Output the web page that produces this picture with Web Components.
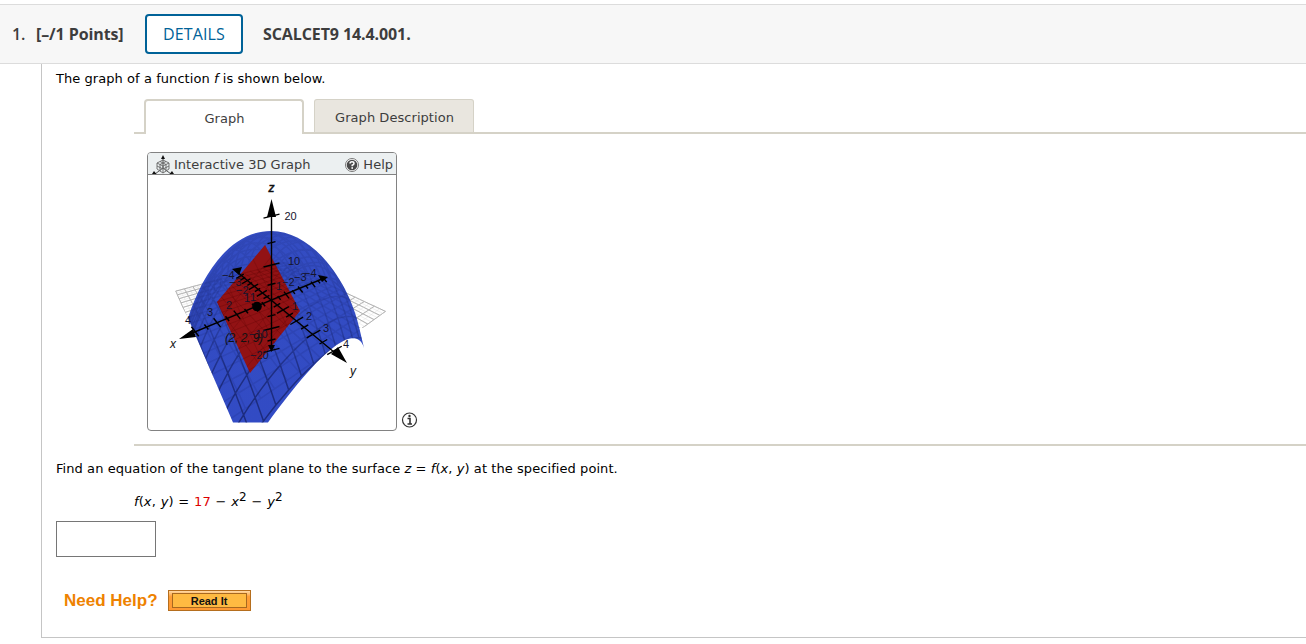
<!DOCTYPE html>
<html lang="en">
<head>
<meta charset="utf-8">
<title>SCALCET9 14.4.001.</title>
<style>
    body {
        margin: 0;
        background: #fff;
        color: #000;
        font: 13px Verdana, "DejaVu Sans", sans-serif;
    }
</style>
</head>
<body>
<question-header number="1." points="[–/1 Points]">SCALCET9 14.4.001.</question-header>
<question-body>
    <p-line>The graph of a function <i>f</i> is shown below.</p-line>
    <tab-panel first="Graph" second="Graph Description">
        <graph-tool></graph-tool>
    </tab-panel>
    <tangent-question></tangent-question>
    <need-help></need-help>
</question-body>

<script>
function attach(el, html) {
    el.attachShadow({ mode: 'open' }).innerHTML = html;
}

/** Grey bar with the question number, points and details button */
class QuestionHeader extends HTMLElement {
    constructor() {
        super();
        attach(this, `
            <style>
                :host {
                    display: flex;
                    align-items: center;
                    box-sizing: border-box;
                    height: 60px;
                    margin-top: 4px;
                    padding-left: 12px;
                    background: #f7f7f7;
                    border-top: 1px solid #dcdcdc;
                    border-bottom: 1px solid #dcdcdc;
                    color: #3d3d3d;
                    font: 700 16px "Open Sans", sans-serif;
                    letter-spacing: -0.1px;
                    white-space: nowrap;
                }
                .number { width: 24px; font-weight: 600; }
                .points { width: 109px; }
                button {
                    width: 98px;
                    height: 40px;
                    margin-right: 20px;
                    padding: 0;
                    border: 2px solid #006298;
                    border-radius: 4px;
                    background: #fff;
                    color: #006298;
                    font: 500 16px "Open Sans", sans-serif;
                    letter-spacing: 0.15px;
                }
            </style>
            <span class="number"></span>
            <span class="points"></span>
            <button>DETAILS</button>
            <span><slot></slot></span>
        `);
    }

    connectedCallback() {
        this.shadowRoot.querySelector('.number').textContent = this.getAttribute('number');
        this.shadowRoot.querySelector('.points').textContent = this.getAttribute('points');
    }
}

class QuestionBody extends HTMLElement {
    constructor() {
        super();
        attach(this, `
            <style>
                :host {
                    display: flex;
                    flex-direction: column;
                    box-sizing: border-box;
                    height: 574px;
                    margin-left: 41px;
                    padding: 7px 0 0 14px;
                    border-left: 1px solid #c5c5c5;
                    border-bottom: 1px solid #c5c5c5;
                }
            </style>
            <slot></slot>
        `);
    }
}

class PLine extends HTMLElement {
    constructor() {
        super();
        attach(this, `
            <style>
                :host { display: block; height: 28px; line-height: 16px; letter-spacing: 0.06px; white-space: nowrap; }
            </style>
            <slot></slot>
        `);
    }
}

class TabPanel extends HTMLElement {
    constructor() {
        super();
        attach(this, `
            <style>
                :host {
                    display: block;
                    box-sizing: border-box;
                    height: 347px;
                    margin-left: 78px;
                    border-bottom: 2px solid #d5d2c7;
                }
                .tabs { display: flex; height: 35px; color: #3d3d3d; letter-spacing: 0.05px; }
                .tab {
                    box-sizing: border-box;
                    width: 160px;
                    padding-left: 1px;
                    text-align: center;
                    border: 2px solid #d5d2c7;
                    border-bottom: 0;
                    border-radius: 4px 4px 0 0;
                    line-height: 35px;
                }
                .idle {
                    height: 35px;
                    border-width: 1px 1px 2px;
                    border-bottom: 2px solid #d5d2c7;
                    background: #e9e6df;
                    border-radius: 3px 3px 0 0;
                }
                .line { box-sizing: border-box; width: 10px; border-bottom: 2px solid #d5d2c7; }
                .rest { flex: 1; }
                .content { padding: 18px 0 0 13px; }
            </style>
            <div class="tabs">
                <div class="line"></div>
                <div class="tab first"></div>
                <div class="line"></div>
                <div class="tab idle second"></div>
                <div class="line rest"></div>
            </div>
            <div class="content"><slot></slot></div>
        `);
    }

    connectedCallback() {
        this.shadowRoot.querySelector('.first').textContent = this.getAttribute('first');
        this.shadowRoot.querySelector('.second').textContent = this.getAttribute('second');
    }
}

class GraphTool extends HTMLElement {
    constructor() {
        super();
        attach(this, `
            <style>
                :host { display: flex; align-items: flex-end; gap: 4px; color: #3d3d3d; }
                .frame {
                    box-sizing: border-box;
                    width: 250px;
                    height: 279px;
                    border: 1px solid #828282;
                    border-radius: 4px;
                    overflow: hidden;
                }
                .bar {
                    display: flex;
                    align-items: center;
                    box-sizing: border-box;
                    height: 22px;
                    padding: 3px 3px 0 4px;
                    background: #ecf0f1;
                    border-bottom: 1px solid #828282;
                    line-height: 18px;
                    white-space: nowrap;
                }
                .cube { flex: none; }
                .title { flex: 1; }
                .q { margin-right: 4px; flex: none; }
                .info { margin-bottom: 3px; }
                svg { display: block; }
            </style>
            <div class="frame">
                <div class="bar">
                    <svg class="cube" width="22" height="20" viewBox="0 0 22 20" fill="none" stroke="#666" stroke-width="0.9">
                        <path d="M11 3V13M11 13L3 19M11 13L19 19" stroke="#444"/>
                        <path d="M11 5L17 8V14L11 18L5 14V8ZM5 8L11 11L17 8M11 11V18M8 6.500L14 9.500V16M14 6.500L8 9.500V16M5 11L11 14L17 11"/>
                        <path d="M11 0L13 4H9ZM0 19L2 16L4.500 19ZM17.500 19L20 16L22 19Z" fill="#111" stroke="none"/>
                    </svg>
                    <span class="title">Interactive 3D Graph</span>
                    <svg class="q" width="14" height="14" viewBox="0 0 14 14">
                        <circle cx="7" cy="7" r="6.500" fill="#fff" stroke="#777"/>
                        <circle cx="7" cy="7" r="5.300" fill="#4a4a4a"/>
                        <path d="M5 5.500Q5 3.700 7 3.700T9 5.400Q9 6.500 7.200 7.200V8.200" fill="none" stroke="#fff" stroke-width="1.500"/>
                        <rect x="6.400" y="9.200" width="1.600" height="1.600" fill="#fff"/>
                    </svg>
                    <span>Help</span>
                </div>
                <surface-plot></surface-plot>
            </div>
            <svg class="info" width="17" height="16" viewBox="0 0 17 16">
                <circle cx="8.500" cy="8" r="7" fill="#fff" stroke="#333" stroke-width="1.200"/>
                <path d="M6.500 6.500H9V12M6.500 12H11" fill="none" stroke="#333" stroke-width="1.600"/>
                <circle cx="8.500" cy="4" r="1.200" fill="#333"/>
            </svg>
        `);
    }
}

// Perspective projection of a point in graph space to the canvas
function project(x, y, z) {
    const d = 1 - 0.0446 * x - 0.0833 * y - 0.01327 * z;
    return [271.5 + (-15.7 * x + 10.5 * y) / d, 301 + (6.27 * x + 8.25 * y - 3.12 * z) / d];
}

// The z = 0 plane, with its side corners pulled to the edges of the drawing
function projectFloor(x, y) {
    const [px, py] = project(x, y, 0);
    const left = Math.max(0, (x - y) / 8);
    const right = Math.max(0, (y - x) / 8);
    return [px - 5 * left - 10 * right, py - 3 * left + right];
}

// Grid lines over -4..4, point(x, y) gives the place on the canvas
function gridPath(point, step) {
    let d = '';
    for (let a = -4; a <= 4; a += step) {
        for (const flip of [false, true]) {
            for (let b = -4; b <= 4; b += 0.25) {
                const p = flip ? point(b, a) : point(a, b);
                d += (b === -4 ? 'M' : 'L') + p[0].toFixed(1) + ' ' + p[1].toFixed(1);
            }
        }
    }
    return d;
}

// Tick marks along one axis, dx and dy are the half length of a mark
function ticks(points, dx, dy) {
    return points.map(([x, y, s]) =>
        `M${x - dx * s} ${y - dy * s}L${x + dx * s} ${y + dy * s}`).join('');
}

class SurfacePlot extends HTMLElement {
    constructor() {
        super();
        const range = [-4, -3.5, -3, -2.5, -2, -1.5, -1, -0.5, 0.5, 1, 1.5, 2, 2.5, 3, 3.5, 4];
        const size = v => (v % 1 ? 0.55 : 1) * (1 + v * 0.08);
        const xTicks = range.map(v => [...project(v, 0, 0), size(v)]);
        const yTicks = range.map(v => [...project(0, v, 0), size(v)]);
        const zTicks = [-20, -15, -10, -5, 5, 10, 15, 20].map(v => [...project(0, 0, v), v % 10 ? 0.5 : 1]);
        const labels = [
            [288, 265, '10'],
            [222, 279, '−4'], [229, 286, '−3'], [236, 293.500, '−2'], [244, 302, '1'], [250, 301, '1'],
            [226, 309, '2'], [207, 316, '3'], [185, 324, '4'],
            [276, 290, '1'], [282, 286, '−2'], [294, 281, '−3'], [304, 277, '−4'],
            [292, 310, '1'], [306, 320, '2'], [323, 332, '3'], [343, 348, '4'],
            [249, 338, '−10'], [250, 359, '−20']
        ];
        const surface = gridPath((x, y) => project(x, y, 17 - x * x - y * y), 0.5);
        const plane = gridPath((x, y) => project(x, y, 25 - 4 * x - 4 * y), 0.5);
        const floor = gridPath(projectFloor, 0.5);
        const floorFine = gridPath(projectFloor, 0.25);
        attach(this, `
            <style>
                :host { display: block; }
                svg { display: block; }
                text { font: 11px "Liberation Sans", Arial, sans-serif; fill: #14142c; }
                .name { font-style: italic; font-size: 12px; fill: #111; }
            </style>
            <svg width="248" height="255" viewBox="148 175 248 255">
                <defs>
                    <linearGradient id="blue" x1="0" y1="0" x2="0" y2="1">
                        <stop offset="0" stop-color="#344dc2"/>
                        <stop offset="1" stop-color="#324bc4"/>
                    </linearGradient>
                    <linearGradient id="lines" gradientUnits="userSpaceOnUse" x1="0" y1="231" x2="0" y2="422">
                        <stop offset="0" stop-color="#16236c" stop-opacity="0.12"/>
                        <stop offset="0.45" stop-color="#16236c" stop-opacity="0.28"/>
                        <stop offset="0.75" stop-color="#101a58" stop-opacity="0.6"/>
                        <stop offset="1" stop-color="#101a58" stop-opacity="0.65"/>
                    </linearGradient>
                    <clipPath id="surface">
                        <path d="M188 318C203 272 231 231 271 231C313 231 350 282 360 331L364 348C361 337 353 337 345 340C322 351 292 390 268 422.500H233Z"/>
                    </clipPath>
                    <clipPath id="plane"><path d="M265 245L300 311L250 373L217 302Z"/></clipPath>
                    <clipPath id="floor"><path d="M148 250H396V322L362 328H346L300 300L192 324Z"/></clipPath>
                </defs>
                <path clip-path="url(#floor)" d="${floor}" fill="none" stroke="#a8a8a8"/>
                <path clip-path="url(#floor)" d="${floorFine}" fill="none" stroke="#ccc" stroke-opacity="0.3"/>
                <g clip-path="url(#surface)">
                    <rect x="148" y="175" width="248" height="255" fill="url(#blue)"/>
                    <path d="${floor}" fill="none" stroke="#18256f" stroke-opacity="0.17" stroke-width="1.500"/>
                    <path d="${surface}" fill="none" stroke="url(#lines)" stroke-width="1.500"/>
                </g>
                <g clip-path="url(#plane)">
                    <rect x="210" y="240" width="95" height="140" fill="#921214"/>
                    <path d="${plane}" fill="none" stroke="#5c0808" stroke-opacity="0.25"/>
                    <path d="${floor}" fill="none" stroke="#5c0808" stroke-opacity="0.3"/>
                </g>
                <g stroke="#000" stroke-width="1.400" fill="none">
                    <path d="M271.500 210V346M185 336L322 279M236 271L340 357"/>
                    <path d="${ticks(xTicks, 2.8, 3.6)}"/>
                    <path d="${ticks(yTicks, 5.5, -3.2)}"/>
                    <path d="${ticks(zTicks, 8, -2)}"/>
                </g>
                <path d="M271.500 199L276 217H267ZM179 339L193 329L196 337ZM347 363L331 354L338 347ZM328 277L318 275L322 282ZM232 269L242 267L239 275ZM271.500 352L268 345H275Z"/>
                <circle cx="257" cy="306.500" r="4.800"/>
                <text x="284.500" y="219.500">20</text>
                ${labels.map(([x, y, t]) => `<text x="${x}" y="${y}">${t}</text>`).join('')}
                <text class="name" x="225" y="342" textLength="38">(2, 2, 9)</text>
                <text class="name" x="268.500" y="191.500" stroke="#111" stroke-width="0.500">z</text>
                <text class="name" x="170" y="348">x</text>
                <text class="name" x="350" y="375">y</text>
            </svg>
        `);
    }
}

class TangentQuestion extends HTMLElement {
    constructor() {
        super();
        attach(this, `
            <style>
                :host { display: block; padding-top: 14px; white-space: nowrap; line-height: 18px; }
                .text { letter-spacing: 0.07px; }
                .formula { margin: 12px 0 0 78px; height: 24px; line-height: 24px; letter-spacing: 0.1px; word-spacing: 0.5px; }
                .num { color: #d00; }
                sup { font-size: 12px; line-height: 0; vertical-align: 5px; }
                input {
                    display: block;
                    box-sizing: border-box;
                    width: 100px;
                    height: 36px;
                    margin-top: 7px;
                    border: 1px solid #767676;
                    background: #fff;
                }
            </style>
            <div class="text">Find an equation of the tangent plane to the surface <i>z</i> = <i>f</i>(<i>x</i>, <i>y</i>) at the specified point.</div>
            <div class="formula"><i>f</i>(<i>x</i>, <i>y</i>) = <span class="num">17</span> − <i>x</i><sup>2</sup> − <i>y</i><sup>2</sup></div>
            <input>
        `);
    }
}

class NeedHelp extends HTMLElement {
    constructor() {
        super();
        attach(this, `
            <style>
                :host {
                    display: flex;
                    align-items: center;
                    gap: 10px;
                    margin: 33px 0 0 8px;
                    color: #ee8200;
                    font: bold 17px "Liberation Sans", Arial, sans-serif;
                }
                button {
                    width: 83px;
                    height: 21px;
                    padding: 2px 3px;
                    border: 1px solid #b56e1e;
                    background: linear-gradient(#ffd9a5, #ff9d35 30%, #ff9933);
                }
                button span {
                    display: block;
                    box-sizing: border-box;
                    height: 15px;
                    border: 1px solid #a8681f;
                    background: #ffba42;
                    color: #111;
                    font: bold 11px/14px "Liberation Sans", Arial, sans-serif;
                }
            </style>
            <span>Need Help?</span>
            <button><span>Read It</span></button>
        `);
    }
}

customElements.define('question-header', QuestionHeader);
customElements.define('question-body', QuestionBody);
customElements.define('p-line', PLine);
customElements.define('tab-panel', TabPanel);
customElements.define('surface-plot', SurfacePlot);
customElements.define('graph-tool', GraphTool);
customElements.define('tangent-question', TangentQuestion);
customElements.define('need-help', NeedHelp);
</script>
</body>
</html>
